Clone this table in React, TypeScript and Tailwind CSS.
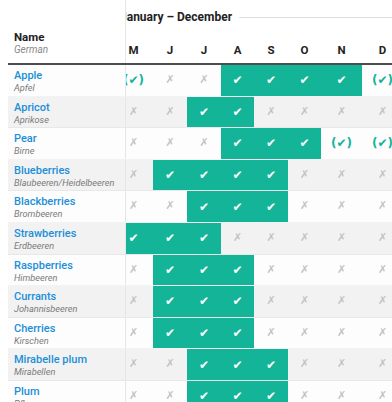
import React from "react";

type Mark = "y" | "p" | "n";

const MONTHS: { label: string; w: string }[] = [
  { label: "M", w: "w-[39px]" },
  { label: "J", w: "w-[34px]" },
  { label: "J", w: "w-[34px]" },
  { label: "A", w: "w-[33px]" },
  { label: "S", w: "w-[34px]" },
  { label: "O", w: "w-[33px]" },
  { label: "N", w: "w-[41px]" },
  { label: "D", w: "w-[41px]" },
];

// May..December (Jan–Apr are scrolled out of view behind the name column)
const FRUITS: { name: string; german: string; marks: string }[] = [
  { name: "Apple", german: "Apfel", marks: "pnnyyyyp" },
  { name: "Apricot", german: "Aprikose", marks: "nnyynnnn" },
  { name: "Pear", german: "Birne", marks: "nnnyyypp" },
  { name: "Blueberries", german: "Blaubeeren/Heidelbeeren", marks: "nyyyynnn" },
  { name: "Blackberries", german: "Brombeeren", marks: "nnyyynnn" },
  { name: "Strawberries", german: "Erdbeeren", marks: "yyynnnnn" },
  { name: "Raspberries", german: "Himbeeren", marks: "nyyynnnn" },
  { name: "Currants", german: "Johannisbeeren", marks: "nyyynnnn" },
  { name: "Cherries", german: "Kirschen", marks: "nyyynnnn" },
  { name: "Mirabelle plum", german: "Mirabellen", marks: "nnyyynnn" },
  { name: "Plum", german: "Pflaumen", marks: "nnyyynnn" },
];

function Cell({ mark, w }: { mark: Mark; w: string }) {
  if (mark === "y") {
    return (
      <div
        className={`${w} shrink-0 h-full flex items-center justify-center bg-[#13b497] text-white text-[12px] font-bold [font-family:'DejaVu_Sans',sans-serif]`}
      >
        ✔
      </div>
    );
  }
  if (mark === "p") {
    return (
      <div
        className={`${w} shrink-0 h-full flex items-center justify-center text-[#13b497] text-[12px] font-bold [font-family:'DejaVu_Sans',sans-serif]`}
      >
        (✔)
      </div>
    );
  }
  return (
    <div
      className={`${w} shrink-0 h-full flex items-center justify-center text-[#c2c2c2] text-[11px] [font-family:'DejaVu_Sans',sans-serif]`}
    >
      ✗
    </div>
  );
}

export default function App() {
  return (
    <div className="w-[392px] h-[402px] overflow-hidden bg-white pl-2 [font-family:Roboto,'Liberation_Sans',sans-serif] text-[#222]">
      {/* caption */}
      <div className="flex h-[28px]">
        <div className="w-[118px] shrink-0 border-r border-[#e6e6e6] bg-white" />
        <div className="flex-1 overflow-hidden">
          <div className="flex items-center gap-[7px] -ml-[6px] mt-[7px] h-[20px]">
            <span className="text-[12px] font-bold leading-[20px] whitespace-nowrap">
              January – December
            </span>
            <div className="flex-1 h-px bg-[#dedede]" />
          </div>
        </div>
      </div>

      {/* header */}
      <div className="flex h-[37px] border-b-2 border-[#4d4d4d]">
        <div className="w-[118px] shrink-0 border-r border-[#e6e6e6] bg-white pl-[6px] pt-[2px]">
          <div className="text-[11.5px] font-bold leading-[14px]">Name</div>
          <div className="text-[10px] italic leading-[12px] text-[#8a8a8a]">German</div>
        </div>
        <div className="flex-1 overflow-hidden">
          <div className="flex -ml-[12px] h-full items-end pb-[6px]">
            {MONTHS.map((m, i) => (
              <div
                key={i}
                className={`${m.w} shrink-0 text-center text-[11.5px] font-bold leading-[14px]`}
              >
                {m.label}
              </div>
            ))}
          </div>
        </div>
      </div>

      {/* body */}
      {FRUITS.map((f, r) => (
        <div
          key={f.name}
          className={`flex h-[31.6px] border-b border-black/[0.04] ${
            r % 2 === 1 ? "bg-[#f2f2f2]" : "bg-[#fdfdfd]"
          }`}
        >
          <div className="w-[118px] shrink-0 border-r border-[#e6e6e6] pl-[6px] pt-[4px]">
            <div className="text-[11px] font-medium leading-[13px] text-[#1b8fd8] whitespace-nowrap">
              {f.name}
            </div>
            <div className="text-[9.2px] italic leading-[12px] text-[#7a7a7a] whitespace-nowrap">
              {f.german}
            </div>
          </div>
          <div className="flex-1 overflow-hidden">
            <div className="flex -ml-[12px] h-full">
              {MONTHS.map((m, i) => (
                <Cell key={i} mark={f.marks[i] as Mark} w={m.w} />
              ))}
            </div>
          </div>
        </div>
      ))}
    </div>
  );
}
